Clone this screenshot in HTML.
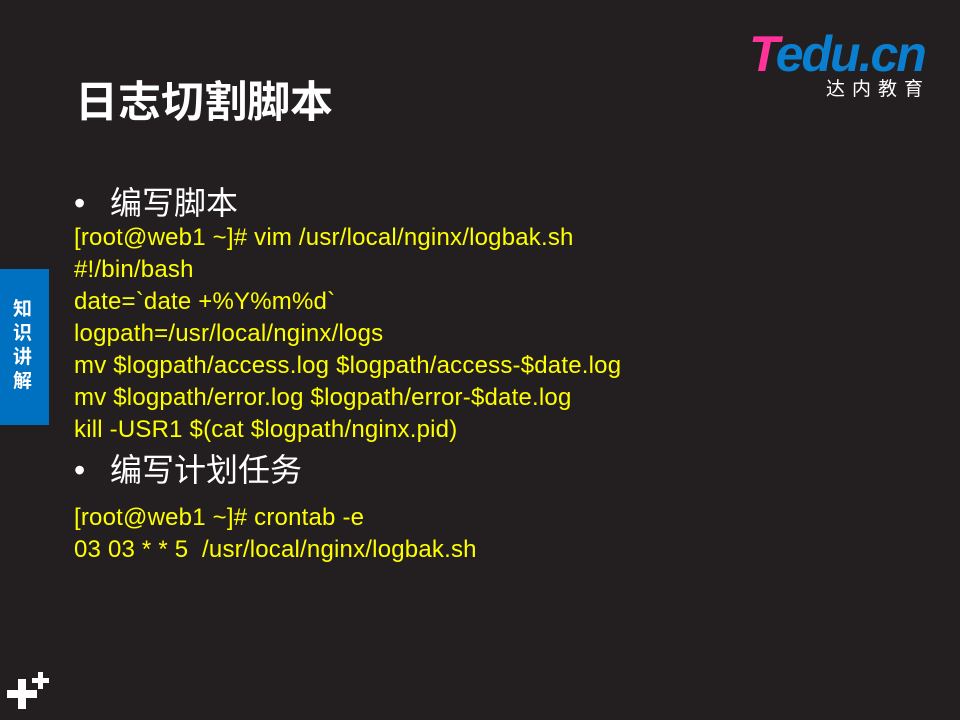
<!DOCTYPE html>
<html><head><meta charset="utf-8"><style>
body{margin:0;width:960px;height:720px;background:#231f20;position:relative;overflow:hidden;font-family:"Liberation Sans","Noto Sans CJK SC",sans-serif}
.a{position:absolute;white-space:nowrap}
.t{left:75px;top:68px;font-size:43px;font-weight:bold;color:#fff}
.h{left:74px;font-size:32px;color:#fff}
.h span{display:inline-block;width:36px}
.y{left:74px;font-size:24px;letter-spacing:0.2px;color:#ffff00;line-height:32px}
</style></head><body>
<div class="a" style="left:749px;top:25px;font-size:50px;font-weight:bold;font-style:italic;letter-spacing:-2px;"><span style="color:#ff3399">T</span><span style="color:#0a7fd0">edu.cn</span></div>
<div class="a" style="left:826px;top:74px;font-size:19px;color:#fff;letter-spacing:7px">达内教育</div>
<div class="a t">日志切割脚本</div>
<div class="a h" style="top:178px"><span>•</span>编写脚本</div>
<div class="a y" style="top:222px">[root@web1 ~]# vim /usr/local/nginx/logbak.sh<br>#!/bin/bash<br>date=`date +%Y%m%d`<br>logpath=/usr/local/nginx/logs<br>mv $logpath/access.log $logpath/access-$date.log<br>mv $logpath/error.log $logpath/error-$date.log<br>kill -USR1 $(cat $logpath/nginx.pid)</div>
<div class="a h" style="top:445px"><span>•</span>编写计划任务</div>
<div class="a y" style="top:502px">[root@web1 ~]# crontab -e<br>03 03 * * 5&nbsp;&nbsp;/usr/local/nginx/logbak.sh</div>
<div class="a" style="left:0;top:269px;width:49px;height:156px;background:#0070c0"></div>
<div class="a" style="left:13px;top:298px;width:24px;font-size:19px;font-weight:bold;color:#fff;line-height:24px;white-space:normal">知识讲解</div>
<div class="a" style="left:7px;top:690px;width:30px;height:8px;background:#fff"></div>
<div class="a" style="left:18px;top:679px;width:8px;height:30px;background:#fff"></div>
<div class="a" style="left:32px;top:678px;width:17px;height:5px;background:#fff"></div>
<div class="a" style="left:38px;top:672px;width:5px;height:17px;background:#fff"></div>
</body></html>
